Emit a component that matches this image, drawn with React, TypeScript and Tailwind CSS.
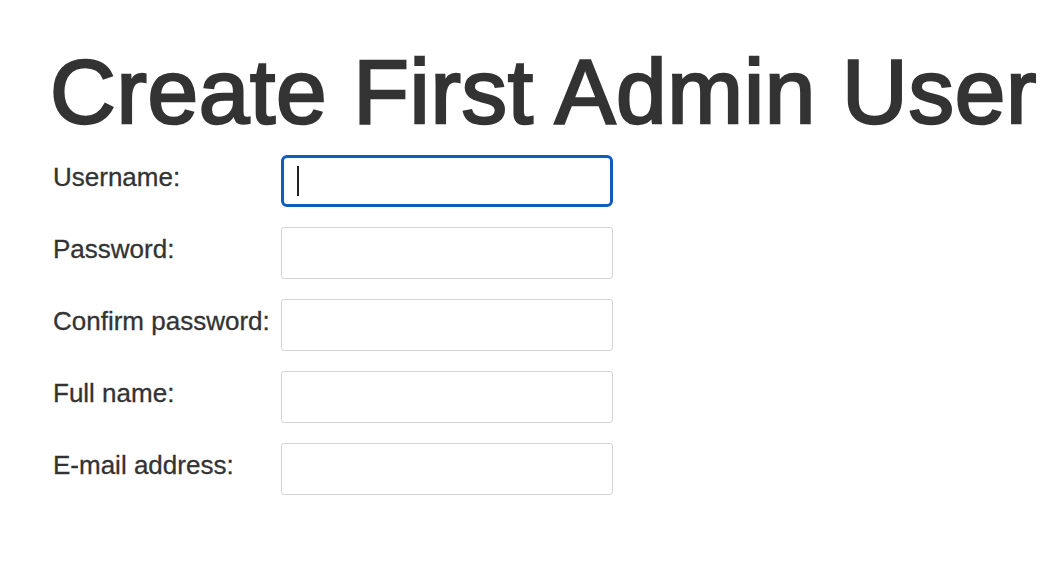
import React from "react";

const fields = ["Username:", "Password:", "Confirm password:", "Full name:", "E-mail address:"];

function App() {
    return (
        <div className="min-h-screen bg-white text-[#333] pl-[50px] pt-[46px]" style={{ fontFamily: '"Liberation Sans", Arial, sans-serif' }}>
            <h1 className="text-[91px] leading-none font-normal whitespace-nowrap tracking-[0.7px] [-webkit-text-stroke:2.5px_#333]">Create First Admin User</h1>

            <div className="mt-[18px] grid grid-cols-[231px_332px] gap-y-5">
                {fields.map((label, i) => (
                    <React.Fragment key={label}>
                        <div className="h-[52px] pt-[9px] pl-[3px] text-[26px] leading-none whitespace-nowrap [-webkit-text-stroke:0.3px_#333]">{label}</div>
                        {i === 0 ? (
                            <div className="h-[52px] rounded-[6px] border-[3px] border-[#0f5cbf] bg-white flex items-center pl-[13px]">
                                {/* caret */}
                                <span className="block w-[2px] h-[30px] bg-[#222]"></span>
                            </div>
                        ) : (
                            <div className="h-[52px] rounded-[3px] border border-[#d4d4d4] bg-white"></div>
                        )}
                    </React.Fragment>
                ))}
            </div>
        </div>
    );
}

export default App;
